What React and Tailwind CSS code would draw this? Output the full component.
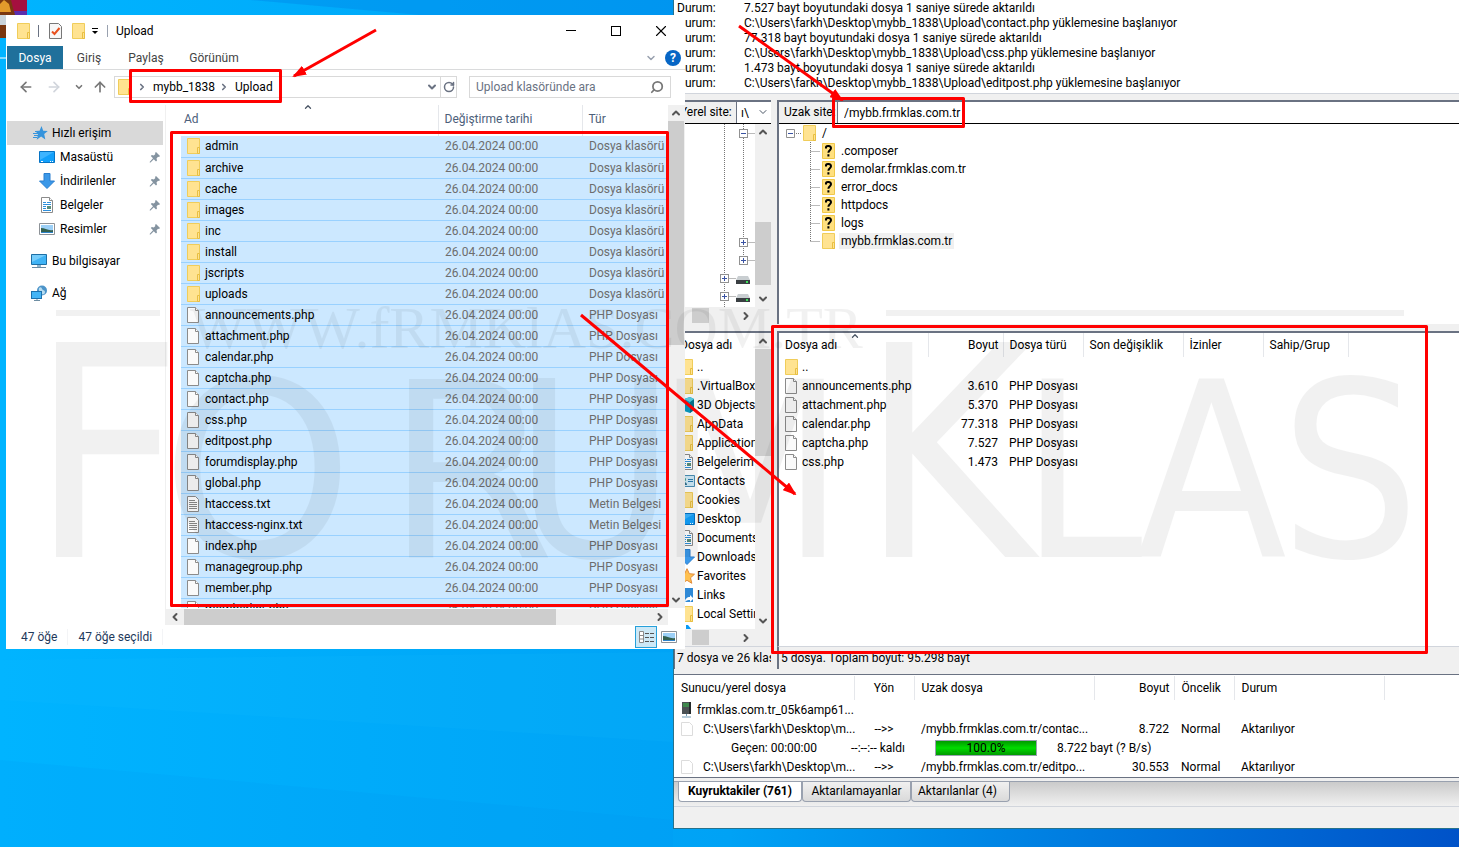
import React from 'react';
import { ArrowLeft, ArrowRight, ArrowUp, ChevronDown, ChevronLeft, ChevronRight, ChevronUp, RotateCw, Search, X } from 'lucide-react';

const DATE = '26.04.2024 00:00';

const uploadFiles = [
  ...['admin', 'archive', 'cache', 'images', 'inc', 'install', 'jscripts', 'uploads'].map(name => ({ name, icon: 'folder', type: 'Dosya klasörü' })),
  ...['announcements', 'attachment', 'calendar', 'captcha', 'contact', 'css', 'editpost', 'forumdisplay', 'global'].map(name => ({ name: `${name}.php`, icon: 'file', type: 'PHP Dosyası' })),
  { name: 'htaccess.txt', icon: 'text', type: 'Metin Belgesi' },
  { name: 'htaccess-nginx.txt', icon: 'text', type: 'Metin Belgesi' },
  ...['index', 'managegroup', 'member', 'memberlist'].map(name => ({ name: `${name}.php`, icon: 'file', type: 'PHP Dosyası' })),
];

const logLines = [
  '7.527 bayt boyutundaki dosya 1 saniye sürede aktarıldı',
  'C:\\Users\\farkh\\Desktop\\mybb_1838\\Upload\\contact.php yüklemesine başlanıyor',
  '77.318 bayt boyutundaki dosya 1 saniye sürede aktarıldı',
  'C:\\Users\\farkh\\Desktop\\mybb_1838\\Upload\\css.php yüklemesine başlanıyor',
  '1.473 bayt boyutundaki dosya 1 saniye sürede aktarıldı',
  'C:\\Users\\farkh\\Desktop\\mybb_1838\\Upload\\editpost.php yüklemesine başlanıyor',
];

const quickAccess = [
  { name: 'Masaüstü', icon: 'desktop' },
  { name: 'İndirilenler', icon: 'download' },
  { name: 'Belgeler', icon: 'document' },
  { name: 'Resimler', icon: 'picture' },
];

const remoteDirs = ['.composer', 'demolar.frmklas.com.tr', 'error_docs', 'httpdocs', 'logs', 'mybb.frmklas.com.tr'];

const localFiles = [
  ['..', 'folder'],
  ['.VirtualBox', 'folder'],
  ['3D Objects', 'cube'],
  ['AppData', 'folder'],
  ['Application', 'folder'],
  ['Belgelerim', 'document'],
  ['Contacts', 'contact'],
  ['Cookies', 'folder'],
  ['Desktop', 'desktop'],
  ['Documents', 'document'],
  ['Downloads', 'download'],
  ['Favorites', 'favorite'],
  ['Links', 'link'],
  ['Local Settings', 'folder'],
  ['', 'music'],
];

const remoteFiles = [
  ['announcements.php', '3.610'],
  ['attachment.php', '5.370'],
  ['calendar.php', '77.318'],
  ['captcha.php', '7.527'],
  ['css.php', '1.473'],
];

const icons = {
  folder: (
    <>
      <path d="M1.500 .500h12v15h-12z" fill="#ffe391" stroke="#f0cd5a" />
      <path d="M11.500 15.500v-6h2v6z" fill="#ffe391" stroke="#e8bf42" />
    </>
  ),
  unknown: (
    <>
      <path d="M1.500 .500h12v15h-12z" fill="#ffe07f" stroke="#f0c849" />
      <path d="M5 5.500V4.200C5 2.500 10 2.500 10 5.200c0 2-2.600 2-2.600 4.600M7.400 11.300v2.200" fill="none" stroke="#000" strokeWidth="2" />
    </>
  ),
  file: (
    <>
      <path d="M1.500 .500h8l3 3v12h-11z" fill="#fafafa" stroke="#8b8b8b" />
      <path d="M9.500 .500v3h3" fill="#fff" stroke="#8b8b8b" />
    </>
  ),
  blank: <path d="M1.500 1.500h8l3 3v10h-11z" fill="#fff" stroke="#dcdcdc" />,
  text: (
    <>
      <path d="M1.500 .500h8l3 3v12h-11z" fill="#fff" stroke="#8b8b8b" />
      <path d="M3 4.500h6M3 6.500h8M3 8.500h8M3 10.500h8M3 12.500h8" stroke="#8a8a8a" />
    </>
  ),
  document: (
    <>
      <path d="M2.500 .500h8l3 3v12h-11z" fill="#fff" stroke="#8b8b8b" />
      <path d="M10.500 .500v3h3" fill="#fff" stroke="#8b8b8b" />
      <path d="M4 5.500h3M8 5.500h4M4 7.500h8M4 9.500h3M4 11.500h3M4 13.500h8" stroke="#2d8fdc" />
      <path d="M8 9h4v3H8z" fill="#5a8d7a" />
    </>
  ),
  desktop: (
    <>
      <path d="M.5 2.500h15v11H.5z" fill="#12a0fb" stroke="#0573c4" />
      <path d="M1 3h14L1 11z" fill="#3db4ff" />
      <path d="M2 12.500h2M11 12.500h1M13 12.500h1" stroke="#fff" />
    </>
  ),
  download: <path d="M5 .500h6v7.500h4.500L8 15.500.5 8H5z" fill="#3b98e8" stroke="#2a7fcf" />,
  picture: (
    <>
      <path d="M.5 2.500h15v11H.5z" fill="#fff" stroke="#8d9297" />
      <path d="M2 4h12v8H2z" fill="#9cd0f7" />
      <path d="M2 7c4 0 7 3 12 2v3H2z" fill="#33604f" />
      <path d="M2 11h12v1H2z" fill="#2e83c9" />
    </>
  ),
  computer: (
    <>
      <path d="M.5 1.500h15v10H.5z" fill="#3fb3f5" stroke="#1e6fa5" />
      <path d="M1 2h14L1 9z" fill="#76cdfb" />
      <path d="M6 12h4v2H6z" fill="#8eb5ce" />
      <path d="M1 14.500h14" stroke="#6a8ca4" />
    </>
  ),
  network: (
    <>
      <circle cx="11" cy="5.500" r="5" fill="#4d94c9" />
      <path d="M8 3c2-2 3 0 3 1s3 1 3 3-2 3-3 2-4-3-3-6z" fill="#b7dcf0" />
      <path d="M0 6h11v8H0z" fill="#1e72ae" />
      <path d="M1 7h9v6H1z" fill="#45b5f6" />
      <path d="M3 15.500h6M6 14v1" stroke="#6e8ea3" />
    </>
  ),
  quick: (
    <>
      <path d="M9.500 1l1.700 4.700 4.600.3-3.600 3 1.100 5.500-4.200-3-4.400 3.200L6 9.500 3.500 6l4.100-.2z" fill="#3694dc" />
      <path d="M3 6.500h4M1 8.500h5M2 10.500h4M1 12.500h4" stroke="#3694dc" />
    </>
  ),
  cube: (
    <>
      <path d="M5 2l6-2 4 2v11l-4 3-6-2z" fill="#079bc2" />
      <path d="M11 5l4-3v11l-4 3z" fill="#06758f" />
      <path d="M5 2l6-2 4 2-4 3z" fill="#5bd1e6" />
    </>
  ),
  contact: (
    <>
      <path d="M.5 2.500h15v11H.5z" fill="#cfeaf8" stroke="#4b8fb5" />
      <circle cx="5" cy="6.500" r="2" fill="#3c9a85" />
      <path d="M2 12c0-4 6-4 6 0z" fill="#2f6f8b" />
      <path d="M9 6.500h5M9 8.500h5" stroke="#2b7db0" />
    </>
  ),
  favorite: <path d="M8 .700l2.300 5 5.200.5-4 3.600 1.300 5.500L8 12.300l-4.800 3 1.300-5.500-4-3.600 5.200-.5z" fill="#ffc050" stroke="#e08b3a" />,
  link: (
    <>
      <path d="M2 1h12v14H2z" fill="#2f89d6" />
      <path d="M14 11L11 8v2c-3 0-5 2-5 5 2-2 3-2 5-2v2l3-3z" fill="#fff" />
    </>
  ),
  music: <path d="M7 0l2 0 4 5-2 1-2-2v11H7z" fill="#0a9bf5" />,
  server: (
    <>
      <path d="M3 0h9v12H3z" fill="#4b5154" />
      <path d="M4 2h6M4 4h6" stroke="#35c248" />
      <path d="M10 0h2v12h-2z" fill="#24292b" />
      <path d="M7.500 12v2M3 15h9" stroke="#6f9ab5" />
    </>
  ),
};

const Icon = ({ name, className = '' }) => (
  <svg viewBox="0 0 16 16" className={`w-4 h-4 shrink-0 ${className}`} aria-hidden="true">{icons[name]}</svg>
);

const Pin = () => (
  <svg viewBox="0 0 12 12" className="w-3 h-3 shrink-0" aria-hidden="true">
    <path d="M7 1l4 4-1 1-1-.2L7.500 7.500 8 9.500 7 10.500 4.800 8.200 1.500 11.500l-.8.1.1-.8L4 7.300 1.800 5l1-1 2 .4L6.400 3 6 2z" fill="#8493a0" />
  </svg>
);

const ArrowButton = ({ icon: Glyph, label, className }) => (
  <button type="button" aria-label={label} className={`flex items-center justify-center shrink-0 bg-[#f0f0f0] text-[#555] ${className}`}>
    <Glyph className="w-3 h-3" strokeWidth={4} />
  </button>
);

const VScroll = ({ children }) => (
  <div className="flex flex-col w-4 shrink-0 bg-[#f0f0f0]">
    <ArrowButton icon={ChevronUp} label="Yukarı kaydır" className="h-4" />
    <div className="flex-1 min-h-0">{children}</div>
    <ArrowButton icon={ChevronDown} label="Aşağı kaydır" className="h-4" />
  </div>
);

const ExplorerTitle = () => (
  <div className="flex items-center h-[31px] pl-[10px]">
    <Icon name="folder" />
    <span className="w-px h-3 ml-1.5 mr-2.5 bg-gray-500" />
    <svg viewBox="0 0 16 16" className="w-4 h-4" aria-hidden="true">
      <path d="M.5 .500h9l3 3v12H.5z" fill="#f7f7f7" stroke="#777" />
      <path d="M3 8.500l2.500 2.500 5-6" fill="none" stroke="#e8501e" strokeWidth="2" />
    </svg>
    <Icon name="folder" className="ml-1.5" />
    <svg viewBox="0 0 8 8" className="w-2 h-2 ml-1" aria-hidden="true">
      <path d="M1 1.500h6" stroke="#000" />
      <path d="M1 4h6L4 7z" />
    </svg>
    <span className="w-px h-3 ml-2 mr-2 bg-gray-400" />
    <h1 className="flex-1">Upload</h1>
    <button type="button" aria-label="Küçült" className="flex items-center justify-center w-[45px] h-full"><span className="w-2.5 h-px bg-black" /></button>
    <button type="button" aria-label="Büyüt" className="flex items-center justify-center w-[45px] h-full"><span className="w-2.5 h-2.5 border border-black" /></button>
    <button type="button" aria-label="Kapat" className="flex items-center justify-center w-[45px] h-full"><X className="w-[18px] h-[18px]" strokeWidth={1.5} /></button>
    <span className="w-0.5" />
  </div>
);

const ExplorerMenu = () => (
  <nav className="flex h-6 border-b border-[#dadbdc] text-[#444]">
    <button type="button" className="w-14 ml-px bg-[#1f709b] text-white">Dosya</button>
    <button type="button" className="w-[52px]">Giriş</button>
    <button type="button" className="w-[62px]">Paylaş</button>
    <button type="button" className="w-[74px]">Görünüm</button>
    <button type="button" aria-label="Şeridi genişlet" className="ml-auto text-gray-400"><ChevronDown className="w-3 h-3" strokeWidth={3} /></button>
    <button type="button" aria-label="Yardım" className="self-center w-4 h-4 ml-2 mr-1 rounded-full bg-[#0766c5] text-white font-bold leading-4">?</button>
  </nav>
);

const AddressBar = () => (
  <div className="flex items-center h-[35px] pl-3 pb-px text-[#777]">
    <button type="button" aria-label="Geri"><ArrowLeft className="w-4 h-4" strokeWidth={2.5} /></button>
    <button type="button" aria-label="İleri" className="ml-3 text-gray-300"><ArrowRight className="w-4 h-4" strokeWidth={2.5} /></button>
    <button type="button" aria-label="Son konumlar" className="ml-3"><ChevronDown className="w-2.5 h-2.5" strokeWidth={4} /></button>
    <button type="button" aria-label="Yukarı" className="ml-2"><ArrowUp className="w-4 h-4" strokeWidth={2.5} /></button>
    <div className="flex items-center h-[22px] flex-1 ml-1.5 pl-0.5 border border-[#d9d9d9] text-black">
      <Icon name="folder" />
      <ChevronRight className="w-2.5 h-2.5 ml-1 text-gray-500" strokeWidth={4} />
      <a href="#mybb" className="ml-1.5">mybb_1838</a>
      <ChevronRight className="w-2.5 h-2.5 ml-1 text-gray-500" strokeWidth={4} />
      <a href="#upload" className="ml-1.5">Upload</a>
      <button type="button" aria-label="Önceki konumlar" className="ml-auto mr-0.5 text-gray-500"><ChevronDown className="w-3 h-3" strokeWidth={4} /></button>
      <button type="button" aria-label="Yenile" className="flex items-center justify-center w-4 h-full border-l border-[#d9d9d9] text-gray-500"><RotateCw className="w-3 h-3" strokeWidth={3} /></button>
    </div>
    <label className="flex items-center w-[202px] h-[22px] ml-3 mr-3.5 px-1 border border-[#d9d9d9]">
      <input type="search" aria-label="Ara" placeholder="Upload klasöründe ara" className="flex-1 min-w-0 pl-0.5 outline-none placeholder:text-gray-500" />
      <Search className="w-3.5 h-3.5 mr-0.5 -scale-x-100" strokeWidth={3} />
    </label>
  </div>
);

const Sidebar = () => (
  <aside className="w-[160px] shrink-0 pt-4 pl-px border-r border-[#f0f0f0]">
    <a href="#quick" className="flex items-center h-6 w-[156px] pl-[25px] gap-1 bg-[#d9d9d9]"><Icon name="quick" />Hızlı erişim</a>
    {quickAccess.map(item => (
      <a key={item.name} href="#quick" className="flex items-center h-6 w-[156px] pl-8 pr-0.5 gap-[5px]">
        <Icon name={item.icon} />
        <span className="flex-1">{item.name}</span>
        <Pin />
      </a>
    ))}
    <a href="#pc" className="flex items-center h-6 mt-2 pl-6 gap-[5px]"><Icon name="computer" />Bu bilgisayar</a>
    <a href="#net" className="flex items-center h-6 mt-2 pl-6 gap-[5px]"><Icon name="network" />Ağ</a>
  </aside>
);

const ExplorerFiles = () => (
  <div className="flex-1 min-w-0 pl-[15px] h-[503px] overflow-hidden">
    <table className="w-full table-fixed border-collapse text-left">
      <colgroup>
        <col />
        <col className="w-36" />
        <col className="w-[86px]" />
      </colgroup>
      <thead>
        <tr className="h-[31px] text-[#4c607a]">
          <th className="relative p-0 pl-[3px] pb-1 font-normal align-middle">
            Ad
            <ChevronUp className="absolute top-[-3px] left-[122px] w-2.5 h-2.5 text-gray-600" strokeWidth={3} />
          </th>
          <th className="p-0 pl-1.5 pb-1 font-normal border-l border-gray-200">Değiştirme tarihi</th>
          <th className="p-0 pl-1.5 pb-1 font-normal border-l border-gray-200">Tür</th>
        </tr>
      </thead>
      <tbody>
        {uploadFiles.map(file => (
          <tr key={file.name} className="h-[21px] bg-[#cce8ff] border-b border-[#99d1ff]">
            <td className="p-0 pl-[5px]"><span className="flex items-center gap-[3px] h-5"><Icon name={file.icon} />{file.name}</span></td>
            <td className="p-0 pl-[7px] text-[#6d6d6d]">{DATE}</td>
            <td className="p-0 pl-[7px] text-[#6d6d6d] whitespace-nowrap">{file.type}</td>
          </tr>
        ))}
      </tbody>
    </table>
  </div>
);

const Explorer = () => (
  <section className="absolute top-[15px] left-1.5 w-[679px] bg-white">
    <ExplorerTitle />
    <ExplorerMenu />
    <AddressBar />
    <div className="flex">
      <Sidebar />
      <div className="flex-1 min-w-0">
        <div className="flex">
          <ExplorerFiles />
          <VScroll><div className="h-[224px] bg-[#cdcdcd]" /></VScroll>
          <span className="w-px bg-[#f0f0f0]" />
        </div>
        <div className="flex h-4 mt-px mr-[17px] bg-[#f0f0f0]">
          <ArrowButton icon={ChevronLeft} label="Sola kaydır" className="w-[18px]" />
          <div className="w-[372px] bg-[#cdcdcd]" />
          <ArrowButton icon={ChevronRight} label="Sağa kaydır" className="w-4 ml-auto" />
        </div>
      </div>
    </div>
    <footer className="flex items-center h-6 pl-[15px] text-[#1e395b]">
      <span className="pr-2.5 border-r border-gray-100">47 öğe</span>
      <span className="pl-2.5 pr-2.5 border-r border-gray-100">47 öğe seçildi</span>
      <button type="button" aria-label="Ayrıntılar" className="ml-auto w-[22px] h-[22px] border border-[#26a0da] bg-[#cce8f6]">
        <svg viewBox="0 0 20 20" className="w-5 h-5">
          <path d="M3.500 4.500h4v11h-4zM3.500 8.500h4M3.500 12h4" fill="#fff" stroke="#8a8a8a" />
          <path d="M9 6.500h4M14 6.500h4M9 10.500h4M14 10.500h4M9 14.500h4M14 14.500h4" stroke="#555" />
        </svg>
      </button>
      <button type="button" aria-label="Büyük küçük resimler" className="ml-1 mr-2"><Icon name="picture" className="w-3.5 h-3.5" /></button>
    </footer>
  </section>
);

const LocalTree = () => (
  <svg className="w-[81px] h-full shrink-0" aria-hidden="true">
    <g fill="none" stroke="#777" strokeDasharray="1 1">
      <path d="M50.500 0v183M69.500 0v138M69.500 9.500h11M69.500 118.500h11M69.500 136.500h11M50.500 154.500h12M50.500 172.500h12" />
    </g>
    {[[69, 9, false], [69, 118, true], [69, 136, true], [50, 154, true], [50, 172, true]].map(([x, y, plus]) => (
      <g key={`${x}-${y}`}>
        <rect x={x - 3.5} y={y - 3.5} width="8" height="8" fill="#fff" stroke="#919191" />
        <path d={`M${x - 2} ${y + 0.5}h5${plus ? `M${x + 0.5} ${y - 2}v5` : ''}`} stroke="#3a53a3" />
      </g>
    ))}
    {[152, 170].map(y => (
      <g key={y}>
        <path d={`M64 ${y}h10l2 4H62z`} fill="#c9ced1" />
        <path d={`M62 ${y + 4}h14v4H62z`} fill="#3a3f42" />
        <path d={`M72 ${y + 6}h2`} stroke="#3ee05a" strokeWidth="2" />
      </g>
    ))}
  </svg>
);

const SmallHScroll = () => (
  <div className="flex h-[17px] bg-[#f0f0f0] text-[#555]">
    <span className="w-[18px]" />
    <span className="w-[17px] my-px bg-[#cdcdcd]" />
    <ArrowButton icon={ChevronRight} label="Sağa kaydır" className="w-4 ml-auto mr-[17px]" />
  </div>
);

const LocalPane = () => (
  <div className="flex flex-col w-[97px] shrink-0">
    <div className="h-[224px] border-t-2 border-gray-500">
      <div className="flex h-[22px] border-b border-black">
        <label htmlFor="local-site" className="w-[62px] pl-1.5 leading-5 whitespace-nowrap">Yerel site:</label>
        <div className="relative flex-1 border-l border-gray-500 bg-white">
          <select id="local-site" className="w-full h-full pl-1 appearance-none outline-none"><option>ı\</option></select>
          <ChevronDown className="absolute top-1 right-0.5 w-3 h-3 text-gray-600 pointer-events-none" />
        </div>
      </div>
      <div className="flex h-[183px] bg-white">
        <LocalTree />
        <VScroll><div className="h-[63px] mt-[82px] bg-[#cdcdcd]" /></VScroll>
      </div>
      <SmallHScroll />
    </div>
    <div className="h-[315px] mt-[7px] border-t-2 border-gray-500">
      <div className="flex h-[296px] bg-white overflow-hidden">
        <table className="table-fixed w-[81px] text-left overflow-hidden">
          <thead><tr><th className="p-0 pl-1.5 h-6 font-normal whitespace-nowrap">Dosya adı</th></tr></thead>
          <tbody className="block w-[81px] overflow-hidden">
            {localFiles.map(([name, icon]) => (
              <tr key={icon + name} className="block">
                <td className="flex items-center h-[19px] p-0 pl-[5px] gap-0.5 whitespace-nowrap"><Icon name={icon} />{name}</td>
              </tr>
            ))}
          </tbody>
        </table>
        <VScroll><div className="h-[107px] bg-[#cdcdcd]" /></VScroll>
      </div>
      <SmallHScroll />
    </div>
    <div className="h-[23px] pl-0.5 border-t border-gray-300 border-l border-l-gray-500 leading-[22px] overflow-hidden whitespace-nowrap">7 dosya ve 26 klas</div>
  </div>
);

const RemoteTree = () => (
  <ul className="h-[200px] pl-[7px] bg-white">
    <li>
      <div className="flex items-center h-[18px]">
        <svg viewBox="0 0 16 18" className="w-4 h-[18px]" aria-hidden="true">
          <path d="M.5 5.500h8v8h-8z" fill="#fff" stroke="#919191" />
          <path d="M2 9.500h5" stroke="#3a53a3" />
          <path d="M10 9.500h6" stroke="#777" strokeDasharray="1 1" />
        </svg>
        <Icon name="folder" />
        <span className="pl-1">/</span>
      </div>
      <ul className="pl-6">
        {remoteDirs.map((dir, i) => {
          const last = i === remoteDirs.length - 1;
          return (
            <li key={dir} className="flex items-center h-[18px]">
              <svg viewBox="0 0 11 18" className="w-[11px] h-[18px]" aria-hidden="true">
                <path d={last ? 'M.5 0v9M.5 9.500h10' : 'M.5 0v18M.5 9.500h10'} fill="none" stroke="#777" strokeDasharray="1 1" />
              </svg>
              <Icon name={last ? 'folder' : 'unknown'} />
              <a href="#dir" className={`ml-0.5 px-0.5 ${last ? 'bg-[#f0f0f0]' : ''}`}>{dir}</a>
            </li>
          );
        })}
      </ul>
    </li>
  </ul>
);

const RemotePane = () => (
  <div className="flex flex-col flex-1 min-w-0 ml-1.5">
    <div className="h-[224px] border-t-2 border-l-2 border-gray-500">
      <div className="flex h-[22px] border-b border-black">
        <label htmlFor="remote-site" className="w-[58px] pl-[5px] leading-5 whitespace-nowrap">Uzak site:</label>
        <input id="remote-site" defaultValue="/mybb.frmklas.com.tr" className="flex-1 min-w-0 pl-1.5 bg-white border-l border-gray-500 outline-none" />
      </div>
      <RemoteTree />
    </div>
    <div className="h-[315px] mt-[7px] border-t-2 border-l-2 border-gray-500 bg-white">
      <table className="w-full table-fixed text-left">
        <colgroup>
          <col className="w-[149px]" />
          <col className="w-[75px]" />
          <col className="w-20" />
          <col className="w-[100px]" />
          <col className="w-20" />
          <col className="w-[85px]" />
          <col />
        </colgroup>
        <thead>
          <tr className="h-6">
            <th className="relative p-0 pl-1.5 font-normal border-r border-gray-200">
              Dosya adı
              <ChevronUp className="absolute -top-0.5 left-[71px] w-2.5 h-2.5 text-gray-600" strokeWidth={3} />
            </th>
            <th className="p-0 pr-1 font-normal border-r border-gray-200 text-right">Boyut</th>
            <th className="p-0 pl-1.5 font-normal border-r border-gray-200">Dosya türü</th>
            <th className="p-0 pl-1.5 font-normal border-r border-gray-200">Son değişiklik</th>
            <th className="p-0 pl-1.5 font-normal border-r border-gray-200">İzinler</th>
            <th className="p-0 pl-1.5 font-normal border-r border-gray-200">Sahip/Grup</th>
            <th />
          </tr>
        </thead>
        <tbody>
          <tr><td className="p-0 pl-[5px]"><span className="flex items-center h-[19px] gap-0.5"><Icon name="folder" />..</span></td></tr>
          {remoteFiles.map(([name, size]) => (
            <tr key={name}>
              <td className="p-0 pl-[5px]"><span className="flex items-center h-[19px] gap-0.5"><Icon name="file" />{name}</span></td>
              <td className="p-0 pr-[5px] text-right">{size}</td>
              <td className="p-0 pl-1.5">PHP Dosyası</td>
            </tr>
          ))}
        </tbody>
      </table>
    </div>
    <div className="h-[23px] pl-0.5 border-t border-gray-300 border-l-2 border-l-gray-500 leading-[22px]">5 dosya. Toplam boyut: 95.298 bayt</div>
  </div>
);

const QueueRow = ({ local, remote, size }) => (
  <tr className="h-[19px]">
    <td className="p-0 pl-1.5"><span className="flex items-center h-[19px] gap-[7px]"><Icon name="blank" />{local}</span></td>
    <td className="p-0 text-center">--&gt;&gt;</td>
    <td className="p-0 pl-[7px]">{remote}</td>
    <td className="p-0 pr-[5px] text-right">{size}</td>
    <td className="p-0 pl-[7px]">Normal</td>
    <td className="p-0 pl-[7px]">Aktarılıyor</td>
  </tr>
);

const Queue = () => (
  <div className="h-[104px] mt-[5px] pt-px border-y border-gray-500 bg-white">
    <table className="w-full table-fixed text-left whitespace-nowrap">
      <colgroup>
        <col className="w-[180px]" />
        <col className="w-[60px]" />
        <col className="w-[180px]" />
        <col className="w-20" />
        <col className="w-[60px]" />
        <col className="w-[150px]" />
        <col />
      </colgroup>
      <thead>
        <tr className="h-6">
          <th className="p-0 pl-[7px] font-normal border-r border-gray-200">Sunucu/yerel dosya</th>
          <th className="p-0 font-normal border-r border-gray-200 text-center">Yön</th>
          <th className="p-0 pl-[7px] font-normal border-r border-gray-200">Uzak dosya</th>
          <th className="p-0 pr-1 font-normal border-r border-gray-200 text-right">Boyut</th>
          <th className="p-0 pl-[7px] font-normal border-r border-gray-200">Öncelik</th>
          <th className="p-0 pl-[7px] font-normal border-r border-gray-200">Durum</th>
          <th />
        </tr>
      </thead>
      <tbody>
        <tr><td colSpan={7} className="p-0 pl-[5px]"><span className="flex items-center h-[19px] gap-0.5"><Icon name="server" />frmklas.com.tr_05k6amp61...</span></td></tr>
        <QueueRow local="C:\Users\farkh\Desktop\m..." remote="/mybb.frmklas.com.tr/contac..." size="8.722" />
        <tr>
          <td colSpan={7} className="p-0">
            <div className="flex items-center h-[19px] pl-[57px]">
              <span className="w-[120px]">Geçen: 00:00:00</span>
              <span className="w-[84px]">--:--:-- kaldı</span>
              <span role="progressbar" aria-valuenow={100} className="w-[102px] h-4 mr-5 border border-gray-400 bg-linear-to-b from-[#009a00] via-[#00dc00] to-[#009a00] text-center leading-[14px]">100.0%</span>
              <span>8.722 bayt (? B/s)</span>
            </div>
          </td>
        </tr>
        <QueueRow local="C:\Users\farkh\Desktop\m..." remote="/mybb.frmklas.com.tr/editpo..." size="30.553" />
      </tbody>
    </table>
  </div>
);

const FileZilla = () => (
  <section className="absolute top-0 left-[673px] right-0 border-l border-b border-[#27728c] bg-[#f0f0f0] overflow-hidden">
    <div className="h-[94px] pt-px pl-[3px] border-b border-gray-300 bg-white">
      {logLines.map(line => (
        <p key={line} className="flex h-[15px] leading-[15px] whitespace-nowrap"><span className="w-[67px] shrink-0">Durum:</span>{line}</p>
      ))}
    </div>
    <div className="flex mt-1.5">
      <LocalPane />
      <RemotePane />
    </div>
    <Queue />
    <div role="tablist" className="flex h-[26px] mt-[3px] pl-1 border-t border-b border-gray-300 border-t-gray-400 bg-linear-to-b from-[#cbcbcb] to-[#f0f0f0]">
      <button role="tab" type="button" aria-selected="true" className="h-5 w-[124px] pb-0.5 border border-t-0 border-gray-400 rounded-b bg-white font-bold leading-4 whitespace-nowrap">Kuyruktakiler (761)</button>
      <button role="tab" type="button" aria-selected="false" className="h-5 w-[109px] pb-0.5 border border-t-0 border-gray-400 rounded-b bg-linear-to-b from-[#f0f0f0] to-[#dadada] leading-4">Aktarılamayanlar</button>
      <button role="tab" type="button" aria-selected="false" className="h-5 w-[99px] pb-0.5 border border-t-0 border-gray-400 rounded-b bg-linear-to-b from-[#f0f0f0] to-[#dadada] pr-1.5 leading-4">Aktarılanlar (4)</button>
    </div>
    <div className="h-[21px]" />
  </section>
);

const letters = [
  ['F', 30, 295], ['O', 161, 245], ['R', 385, 245], ['U', 514, 245], ['M', 655, 245],
  ['K', 860, 295], ['L', 1020, 245], ['A', 1136, 245], ['S', 1280, 245],
];

const Watermark = () => (
  <svg className="absolute inset-0 w-full h-full pointer-events-none">
    <g opacity="0.05">
      <path d="M56 310h104v6H56zM886 310h518v6H886z" />
      <text y="557">
        {letters.map(([char, x, size]) => (
          <tspan key={char} x={x} fontSize={size} className={'OR'.includes(char) ? "font-['DejaVu_Sans',sans-serif]" : "font-['DejaVu_Sans_Condensed',sans-serif]"}>{char}</tspan>
        ))}
      </text>
    </g>
    <text x="190" y="348" fontSize="60" opacity="0.05" className="font-['Liberation_Serif',serif]">WWW.fRMKlAS.COM.TR</text>
  </svg>
);

// kırmızı kutular ve oklar
const Annotations = () => (
  <svg className="absolute inset-0 w-full h-full pointer-events-none" aria-hidden="true">
    <defs>
      <marker id="head" viewBox="0 0 14 10" refX="12" refY="5" markerWidth="14" markerHeight="10" markerUnits="userSpaceOnUse" orient="auto">
        <path d="M0 0l14 5-14 5z" fill="#f00" />
      </marker>
    </defs>
    <g fill="none" stroke="#f00" strokeWidth="3" strokeLinejoin="round">
      <path d="M130.500 70.500h150v31h-150zM171.500 132.500h496v473h-496zM833.500 98.500h130v28h-130zM772.500 326.500h654v326h-654z" />
      <path d="M376 30L294 76" markerEnd="url(#head)" />
      <path d="M739 26L842 100" markerEnd="url(#head)" />
      <path d="M581 315L795 494" markerEnd="url(#head)" />
    </g>
  </svg>
);

const Wallpaper = () => (
  <svg className="absolute inset-0 w-full h-full" preserveAspectRatio="none" viewBox="0 0 1459 847" aria-hidden="true">
    <path d="M0 0h700v40L250 0z" fill="#0078e0" opacity="0.3" />
    <path d="M0 660l673-8v90L0 700z" fill="#20c4ff" opacity="0.1" />
    <path d="M0 760l673 60v27H0z" fill="#008ce8" opacity="0.1" />
    <path d="M0 58h6" stroke="#fff" />
    <path d="M0 0h27v10l-4 20-4 8H0z" fill="#7a3710" />
    <path d="M11 0h16v12H14z" fill="#a5103f" />
    <path d="M14 11h13v4H15z" fill="#5a2fae" />
    <path d="M0 4l4-4 5 4 2 8H0z" fill="#e29a2b" />
    <path d="M0 15h6v10H0z" fill="#c9d3da" />
  </svg>
);

const App = () => (
  <main className="relative min-h-screen overflow-hidden bg-linear-to-r from-[#00b4ff] via-[#00a2f5] to-[#0052c8] font-[Roboto,sans-serif] text-xs text-black">
    <Wallpaper />
    <FileZilla />
    <Explorer />
    <Watermark />
    <Annotations />
  </main>
);

export default App;
